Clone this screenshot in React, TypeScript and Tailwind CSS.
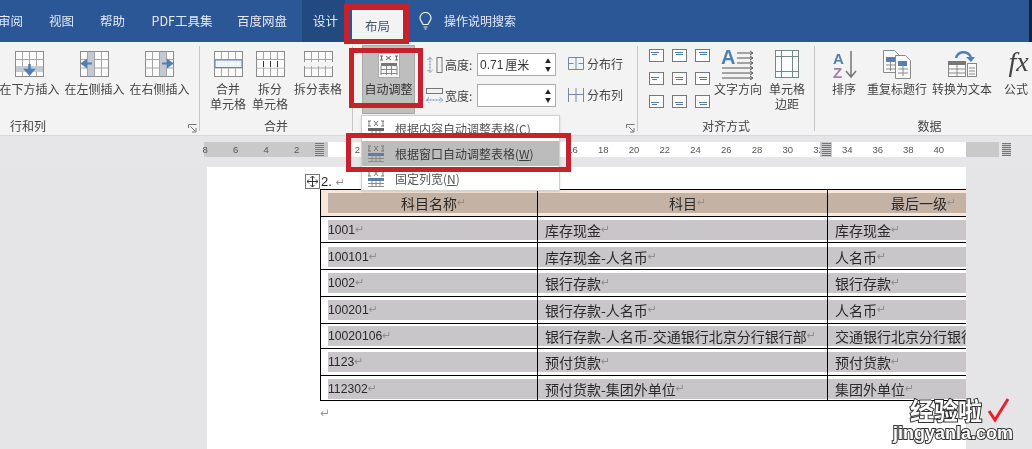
import type { ReactNode } from "react";

const CJK = "font-['Noto_Sans_CJK_SC','Liberation_Sans',sans-serif]";

const tabs = [
  { name: "审阅", w: "w-[25px] -ml-[2px]" },
  { name: "视图", w: "w-[37px] ml-[20px]" },
  { name: "帮助", w: "w-[37px] ml-[14px]" },
  { name: "PDF工具集", w: "w-[64px] ml-[19px]" },
  { name: "百度网盘", w: "w-[52px] ml-[22px]" },
];

const rows = [
  { h: "h-[26px]", pt: "pt-[3px]", a: "1001", b: "库存现金", c: "库存现金" },
  { h: "h-[27px]", pt: "pt-[4px]", a: "100101", b: "库存现金-人名币", c: "人名币" },
  { h: "h-[27px]", pt: "pt-[3px]", a: "1002", b: "银行存款", c: "银行存款" },
  { h: "h-[27px]", pt: "pt-[3px]", a: "100201", b: "银行存款-人名币", c: "人名币" },
  { h: "h-[25px]", pt: "pt-[2px]", a: "10020106", b: "银行存款-人名币-交通银行北京分行银行部", c: "交通银行北京分行银行部" },
  { h: "h-[27px]", pt: "pt-[3px]", a: "1123", b: "预付货款", c: "预付货款" },
  { h: "h-[25px]", pt: "pt-[3px]", a: "112302", b: "预付货款-集团外单位", c: "集团外单位" },
];

// numbers from 4 to 14 sit behind the open menu
const rightRuler = ["2", "", "", "", "", "", "", "16", "18", "20", "22", "24", "26", "28", "30", "32"];

// table glyph used by most ribbon buttons
function TableIcon({ children }: { children?: ReactNode }) {
  return (
    <svg width="31" height="27" viewBox="0 0 31 27" fill="none" stroke="#8b8b8b" strokeWidth="1">
      <rect x="1.5" y="0.5" width="28" height="25" fill="#fbfbfb" />
      <path d="M1.5 8.5h28M1.5 17h28M8.5 .5v25M15.5 .5v25M22.5 .5v25" stroke="#a5a5a5" />
      {children}
    </svg>
  );
}

function Launcher() {
  return (
    <svg width="9" height="9" viewBox="0 0 9 9" fill="none" stroke="#777" strokeWidth="1">
      <path d="M.5 4V.5H8.5M2.5 2.5l5 5M4 8h4V4" />
    </svg>
  );
}

function Group({ label, w, launcher, left, children }: { label?: string; w: string; launcher?: boolean; left?: boolean; children: ReactNode }) {
  return (
    <div className={`${w} h-[85px] mt-[4px] shrink-0 border-r border-[#c6c6c6] flex flex-col relative`}>
      <div className="flex-1 pt-[5px] flex items-start">{children}</div>
      <div className={`h-[10px] flex items-center text-[12px] text-[#444] ${left ? "justify-start pl-[10px]" : "justify-center"}`}>{label}</div>
      {launcher && (
        <div className="absolute right-[2px] bottom-[-2px] flex">
          <Launcher />
        </div>
      )}
    </div>
  );
}

function Btn({ w, icon, lines }: { w: string; icon: ReactNode; lines: string[] }) {
  return (
    <div className={`${w} shrink-0 flex flex-col items-center text-[12px] leading-[15px] text-[#444] whitespace-nowrap`}>
      <div className="h-[30px] flex items-start justify-center">{icon}</div>
      {lines.map((l) => (
        <div key={l}>{l}</div>
      ))}
    </div>
  );
}

function AlignIcon({ i }: { i: number }) {
  const col = i % 3;
  const row = Math.floor(i / 3);
  const x = col === 0 ? 3 : col === 1 ? 4 : 5;
  const y = row === 0 ? 3 : row === 1 ? 5 : 7;
  return (
    <svg width="15" height="13" viewBox="0 0 15 13" fill="none">
      <rect x=".5" y=".5" width="14" height="12" fill="#fff" stroke="#777" />
      <path d={`M${x - 1} ${y}.5h8M${x} ${y + 2}.5h${col === 0 ? 5 : 7}`} stroke="#4f7ba8" />
    </svg>
  );
}

function MenuIcon({ active }: { active?: boolean }) {
  return (
    <svg width="18" height="17" viewBox="0 0 18 17" fill="none">
      <path d="M1 1h3M1 6h3M14 1h3M14 6h3M2 1v5M16 1v5M7 1l4 5M11 1l-4 5" stroke="#777" />
      <rect x="1" y="8" width="16" height="3" fill={active ? "#5b7fa6" : "#666"} />
      <path d="M1 13.5h16M1 16.5h16M5 11v6M9 11v6M13 11v6" stroke="#8c8c8c" />
    </svg>
  );
}

function Ret() {
  return <span className="font-['DejaVu_Sans',sans-serif] text-[11px] text-[#8f8f8f]">↵</span>;
}

function Cell({ text, cls, digits }: { text: string; cls: string; digits?: boolean }) {
  return (
    <div className={`${cls} h-[20px] bg-[#c8c6c9] flex items-center whitespace-nowrap overflow-hidden`}>
      <span className={digits ? "font-['Liberation_Sans',sans-serif] text-[12.2px]" : "text-[14px]"}>{text}</span>
      <Ret />
    </div>
  );
}

const marker = "w-[9px] h-[13px] bg-[repeating-linear-gradient(0deg,#777_0_1px,#ccc_1px_2px)]";

export default function App() {
  return (
    <div className={`w-[1032px] h-[449px] overflow-hidden relative bg-[#e5e5e7] ${CJK} blur-[0.3px]`}>
      {/* tabs */}
      <div className="h-[42px] bg-[#2b5797] flex items-stretch text-[12.5px] text-[#e3eaf4] border-r-[3px] border-[#16243c]">
        {tabs.map((t) => (
          <div key={t.name} className={`${t.w} shrink-0 flex items-center justify-center whitespace-nowrap`}>
            {t.name}
          </div>
        ))}
        <div className="w-[43px] ml-[14px] pl-[4px] bg-[#234a80] flex items-center justify-center">设计</div>
        <div className="w-[51px] ml-[7px] mt-[10px] bg-[#f3f3f3] text-[#44546a] flex items-center justify-center">布局</div>
        <div className="ml-[16px] flex items-center gap-[12px]">
          <svg width="13" height="18" viewBox="0 0 13 18" fill="none" stroke="#f0f0f0" strokeWidth="1.2">
            <path d="M4 12.5C3.5 10 1 9 1 6a5.5 5.5 0 0 1 11 0c0 3-2.5 4-3 6.5zM4.5 15h4M5.5 17h2" />
          </svg>
          <span className="text-[12px]">操作说明搜索</span>
        </div>
      </div>

      {/* ribbon */}
      <div className="h-[94px] bg-[#f3f3f4] flex overflow-hidden border-b border-[#d8d8d8]">
        <Group label="行和列" w="w-[200px]" launcher left>
          <div className="flex -ml-[3px]">
            <Btn
              w="w-[65px]"
              lines={["在下方插入"]}
              icon={
                <TableIcon>
                  <rect x="2" y="15" width="27" height="6" fill="#c3c9d2" stroke="none" />
                  <path d="M15.5 13v7M12 19l3.5 4 3.500-4z" fill="#4f81b0" stroke="#4f81b0" strokeWidth="2.500" />
                </TableIcon>
              }
            />
            <Btn
              w="w-[65px]"
              lines={["在左侧插入"]}
              icon={
                <TableIcon>
                  <rect x="9" y="1" width="6" height="24" fill="#c3c9d2" stroke="none" />
                  <path d="M13 12.500H6M7 9.500l-4 3 4 3z" fill="#4f81b0" stroke="#4f81b0" strokeWidth="2" />
                </TableIcon>
              }
            />
            <Btn
              w="w-[65px]"
              lines={["在右侧插入"]}
              icon={
                <TableIcon>
                  <rect x="16" y="1" width="6" height="24" fill="#c3c9d2" stroke="none" />
                  <path d="M18 12.500h7M24 9.500l4 3-4 3z" fill="#4f81b0" stroke="#4f81b0" strokeWidth="2" />
                </TableIcon>
              }
            />
          </div>
        </Group>

        <Group label="合并" w="w-[153px]">
          <div className="flex ml-[7px]">
            <Btn
              w="w-[42px]"
              lines={["合并", "单元格"]}
              icon={
                <TableIcon>
                  <rect x="2" y="9" width="27" height="7.500" fill="#eef3f8" stroke="#5c88b0" />
                </TableIcon>
              }
            />
            <Btn
              w="w-[42px]"
              lines={["拆分", "单元格"]}
              icon={
                <TableIcon>
                  <rect x="2" y="9" width="27" height="7.500" fill="#fff" stroke="none" />
                  <path d="M8.500 10v6M15.500 10v6M22.500 10v6" stroke="#333" />
                </TableIcon>
              }
            />
            <Btn
              w="w-[54px]"
              lines={["拆分表格"]}
              icon={
                <TableIcon>
                  <rect x="0" y="11" width="31" height="4" fill="#f3f3f4" stroke="none" />
                </TableIcon>
              }
            />
          </div>
        </Group>

        <Group w="w-[285px]" launcher>
          <div className="w-[53px] h-[69px] ml-[9px] -mt-[6px] bg-[#bebebe] border border-[#a8a8a8] flex flex-col items-center pt-[7px] shrink-0 text-[12px] text-[#333]">
            <svg width="22" height="25" viewBox="0 0 22 25" fill="none">
              <rect x=".5" y=".5" width="21" height="24" fill="#f6f6f6" stroke="#ababab" />
              <path d="M2 3h3M2 7h3M17 3h3M17 7h3M3.500 3v4M18.500 3v4M8 3l5 4M13 3l-5 4" stroke="#666" />
              <rect x="3" y="10" width="16" height="3" fill="#777" />
              <path d="M3 16.500h16M3 20.500h16M3 13v9M8.500 13v9M13.500 13v9M19 13v9" stroke="#888" />
            </svg>
            <span className="mt-[3px] leading-[15px]">自动调整</span>
            <span className="mt-[7px] w-[5px] h-[2px] bg-[#666]" />
          </div>

          <div className="ml-[11px] mt-[2px] flex flex-col gap-[8px] text-[12px] text-[#444] shrink-0">
            <div className="h-[23px] flex items-center">
              <svg width="17" height="16" viewBox="0 0 17 16" fill="none">
                <rect x="11" y=".5" width="5" height="15" stroke="#777" />
                <path d="M4 .5v15M1.500 3L4 .5 6.500 3M1.500 13L4 15.500 6.500 13" stroke="#4f7ba8" strokeDasharray="2 1" />
              </svg>
              <span className="ml-[2px] w-[32px]">高度:</span>
              <div className="w-[79px] h-[23px] bg-white border border-[#ababab] flex items-center justify-between pl-[2px] pr-[4px] text-[#333]">
                <span className="font-['Liberation_Sans',sans-serif]">0.71 </span>
                <span className="-ml-[14px]">厘米</span>
                <span className="text-[6px] leading-[8px] text-[#222] flex flex-col">
                  <span>▲</span>
                  <span>▼</span>
                </span>
              </div>
            </div>
            <div className="h-[23px] flex items-center">
              <svg width="17" height="16" viewBox="0 0 17 16" fill="none">
                <rect x=".5" y=".5" width="16" height="5" stroke="#777" />
                <path d="M.5 12h16M3 9.500L.5 12 3 14.500M14 9.500l2.500 2.500-2.500 2.500" stroke="#4f7ba8" strokeDasharray="2 1" />
              </svg>
              <span className="ml-[2px] w-[32px]">宽度:</span>
              <div className="w-[79px] h-[23px] bg-white border border-[#ababab] flex items-center justify-end pr-[4px]">
                <span className="text-[6px] leading-[8px] text-[#222] flex flex-col">
                  <span>▲</span>
                  <span>▼</span>
                </span>
              </div>
            </div>
          </div>

          <div className="ml-[12px] mt-[5px] flex flex-col gap-[16px] text-[12px] text-[#444] shrink-0">
            <div className="h-[15px] flex items-center gap-[3px]">
              <svg width="16" height="13" viewBox="0 0 16 13" fill="none" stroke="#6f8aa5">
                <path d="M.5.5h15M.5 12.500h15M.5 6.500h5M10.500 6.500h5M.5 .5v12M15.500 .5v12M8 .5v12" />
              </svg>
              分布行
            </div>
            <div className="h-[15px] flex items-center gap-[3px]">
              <svg width="16" height="14" viewBox="0 0 16 14" fill="none" stroke="#6f8aa5">
                <path d="M.5 0v14M8 0v14M15.500 0v14M.5 6.500h15" />
              </svg>
              分布列
            </div>
          </div>
        </Group>

        <Group label="对齐方式" w="w-[177px]">
          <div className="ml-[11px] -mt-[2px] grid grid-cols-[23px_23px_19px] gap-y-[10px] shrink-0">
            {[0, 1, 2, 3, 4, 5, 6, 7, 8].map((i) => (
              <AlignIcon key={i} i={i} />
            ))}
          </div>
          <Btn
            w="w-[48px]"
            lines={["文字方向"]}
            icon={
              <svg width="34" height="33" viewBox="0 0 34 33" className="-mt-[4px]" fill="none">
                <text x="0" y="17" fontSize="20" fontWeight="700" fill="#4f81b0" fontFamily="Liberation Sans">A</text>
                <path d="M16 6h15M16 11h15M16 16h15M1 21h30M1 26h30M1 31h30" stroke="#555" />
                <path d="M29 4l3 2-3 2M29 9l3 2-3 2M29 14l3 2-3 2M29 19l3 2-3 2M29 24l3 2-3 2M29 29l3 2-3 2" stroke="#555" />
              </svg>
            }
          />
          <div className="w-[1px] shrink-0" />
          <Btn
            w="w-[48px]"
            lines={["单元格", "边距"]}
            icon={
              <svg width="24" height="28" viewBox="0 0 24 28" className="-mt-[1px]" fill="#fbfbfb" stroke="#6f8a8a">
                <rect x=".5" y=".5" width="23" height="27" />
                <path d="M6.500 .5v27M17.500 .5v27M.5 6.500h23M.5 21.500h23" fill="none" />
              </svg>
            }
          />
        </Group>

        <Group label="数据" w="w-[230px]">
          <div className="flex ml-[9px]">
            <Btn
              w="w-[40px]"
              lines={["排序"]}
              icon={
                <svg width="26" height="29" viewBox="0 0 26 29" fill="none" className="-mt-[1px] ml-[4px]">
                  <text x="0" y="14" fontSize="15" fontWeight="700" fill="#4f81b0" fontFamily="Liberation Sans">A</text>
                  <text x="0" y="28" fontSize="15" fontWeight="700" fill="#a07fa5" fontFamily="Liberation Sans">Z</text>
                  <path d="M18 1v26M13 21l5 6 5-6" stroke="#777" strokeWidth="1.500" />
                </svg>
              }
            />
            <div className="w-[3px]" />
            <Btn
              w="w-[60px]"
              lines={["重复标题行"]}
              icon={
                <svg width="28" height="29" viewBox="0 0 28 29" fill="#fafafa" stroke="#8a8a8a" className="-mt-[1px]">
                  <path d="M.5 .5h11l5 5v17H.5z" />
                  <rect x="3" y="7" width="9" height="5" fill="#5b7fa6" stroke="none" />
                  <path d="M3 15h9M3 19h9M7.500 12v9" fill="none" />
                  <path d="M12.500 5.500h10l5 5v18h-15z" />
                  <rect x="15" y="11" width="9" height="5" fill="#5b7fa6" stroke="none" />
                  <path d="M15 19h10M15 23h10M20 16v10" fill="none" />
                </svg>
              }
            />
            <div className="w-[5px]" />
            <Btn
              w="w-[60px]"
              lines={["转换为文本"]}
              icon={
                <svg width="30" height="30" viewBox="0 0 30 30" fill="none" className="-mt-[1px]">
                  <path d="M9 8C11 1 20 0 24 7" stroke="#4f81b0" strokeWidth="2.500" />
                  <path d="M19 7h9l-4 5z" fill="#4f81b0" />
                  <rect x="1.500" y="11.500" width="17" height="15" fill="#fafafa" stroke="#888" />
                  <rect x="1" y="11" width="18" height="4" fill="#777" />
                  <path d="M1.500 19h17M1.500 23h17M10 15v11" stroke="#888" />
                  <rect x="20.500" y="13.500" width="9" height="13" fill="#fafafa" stroke="#888" />
                  <path d="M22 18h6M22 21h6M22 24h6" stroke="#888" />
                </svg>
              }
            />
            <div className="w-[3px]" />
            <div className="w-[42px] shrink-0 flex flex-col items-center text-[#444] text-[12px] leading-[15px]">
              <div className="h-[30px] -mt-[6px] ml-[5px] font-['Liberation_Serif',serif] italic text-[28px] leading-[34px] text-[#444]">fx</div>
              <div className="mt-[6px]">公式</div>
            </div>
          </div>
        </Group>
      </div>

      {/* ruler */}
      <div className="h-[31px] pt-[6px] bg-[#e6e6e8] overflow-hidden">
        <div className="ml-[204px] w-[812px] h-[15px] flex text-[9.500px] text-[#555] font-['Liberation_Sans',sans-serif] leading-[15px]">
          <div className="w-[124px] bg-[#c9c9c9] flex items-center shrink-0">
            <div className="-ml-[14px] flex shrink-0">
              {["8", "6", "4", "2"].map((n) => (
                <div key={n} className="w-[30.500px] shrink-0 text-center">
                  {n}
                </div>
              ))}
            </div>
            <div className={`ml-[3px] ${marker}`} />
          </div>
          <div className="w-[492px] bg-white flex pl-[14px] shrink-0 overflow-hidden">
            {rightRuler.map((n, i) => (
              <div key={i} className="w-[30.750px] shrink-0 text-center">
                {n}
              </div>
            ))}
          </div>
          <div className="w-[12px] bg-[#c9c9c9] flex items-center justify-center shrink-0">
            <div className={marker} />
          </div>
          <div className="w-[134px] bg-white flex shrink-0">
            {["34", "36", "38", "40"].map((n) => (
              <div key={n} className="w-[30.500px] shrink-0 text-center">
                {n}
              </div>
            ))}
          </div>
          <div className="w-[33px] bg-[#c9c9c9] shrink-0" />
          <div className={`ml-[3px] mt-[1px] ${marker}`} />
        </div>
      </div>

      {/* page */}
      <div className="ml-[207px] w-[759px] h-[282px] bg-white overflow-hidden">
        <div className="ml-[98px] pt-[7px] h-[22px] flex items-center text-[13px] text-[#222]">
          <div className="w-[15px] h-[15px] border border-[#777] bg-white flex items-center justify-center shrink-0">
            <svg width="11" height="11" viewBox="0 0 11 11" fill="none" stroke="#333">
              <path d="M5.500 0v11M0 5.500h11M3.500 2l2-2 2 2M3.500 9l2 2 2-2M2 3.500l-2 2 2 2M9 3.500l2 2-2 2" />
            </svg>
          </div>
          <span className="ml-[1px] font-['Liberation_Sans',sans-serif]">2.</span>
          <span className="ml-[4px]">
            <Ret />
          </span>
        </div>

        <div className="ml-[113px] w-[760px] border-t border-l border-black text-[#2a2a2a]">
          {/* header */}
          <div className="h-[27px] flex border-b border-black bg-[#f7e7da] pt-[3px]">
            <div className="w-[217px] shrink-0 border-r border-black -mt-[3px] pt-[3px]">
              <div className="ml-[7px] h-[20px] bg-[#c4b2a5] pl-[73px] flex items-center text-[14px]">
                科目名称
                <Ret />
              </div>
            </div>
            <div className="w-[290px] shrink-0 border-r border-black -mt-[3px] pt-[3px]">
              <div className="h-[20px] bg-[#c4b2a5] pl-[131px] flex items-center text-[14px]">
                科目
                <Ret />
              </div>
            </div>
            <div className="flex-1 h-[20px] bg-[#c4b2a5] pl-[63px] flex items-center text-[14px]">
              最后一级
              <Ret />
            </div>
          </div>
          {rows.map((r) => (
            <div key={r.a} className={`${r.h} flex border-b border-black`}>
              <div className={`w-[217px] shrink-0 border-r border-black ${r.pt}`}>
                <Cell text={r.a} cls="ml-[7px]" digits />
              </div>
              <div className={`w-[290px] shrink-0 border-r border-black ${r.pt}`}>
                <Cell text={r.b} cls="pl-[7px]" />
              </div>
              <div className={`flex-1 ${r.pt}`}>
                <Cell text={r.c} cls="pl-[7px]" />
              </div>
            </div>
          ))}
        </div>
        <div className="ml-[113px] mt-[3px] font-['DejaVu_Sans',sans-serif] text-[12px] text-[#9a9a9a]">↵</div>
      </div>

      {/* dropdown menu */}
      <div className="absolute left-[361px] top-[115px] w-[199px] h-[76px] bg-white border border-[#d0d0d0] shadow-sm text-[12px] text-[#555]">
        <div className="h-[25px] flex items-center pl-[5px] gap-[10px]">
          <MenuIcon />
          根据内容自动调整表格(C)
        </div>
        <div className="h-[25px] flex items-center pl-[5px] gap-[10px] bg-[#bcbcbc] text-[#3a3a3a]">
          <MenuIcon active />
          <span>
            根据窗口自动调整表格(<span className="underline">W</span>)
          </span>
        </div>
        <div className="h-[25px] flex items-center pl-[5px] gap-[10px]">
          <MenuIcon active />
          <span>
            固定列宽(<span className="underline">N</span>)
          </span>
        </div>
      </div>

      {/* red call-outs */}
      <div className="absolute left-[344px] top-[4px] w-[65px] h-[40px] border-[5px] border-[#c4222c]" />
      <div className="absolute left-[349px] top-[48px] w-[74px] h-[60px] border-[5px] border-[#c4222c]" />
      <div className="absolute left-[346px] top-[133px] w-[225px] h-[39px] border-[5px] border-[#c4222c]" />

      {/* watermark */}
      <div className="absolute left-[893px] top-[396px] w-[125px] flex flex-col text-white font-bold [-webkit-text-stroke:2px_#333] [paint-order:stroke_fill]">
        <div className="flex items-center gap-[5px] h-[28px] pl-[17px]">
          <span className="text-[24px] leading-[28px]">经验啦</span>
          <svg width="24" height="26" viewBox="0 0 24 26" fill="none">
            <path d="M2 14l6 9L21 2" stroke="#e8202a" strokeWidth="3" />
          </svg>
        </div>
        <span className="font-['Liberation_Sans',sans-serif] text-[18px] leading-[18px] whitespace-nowrap">jingyanla.com</span>
      </div>
    </div>
  );
}
